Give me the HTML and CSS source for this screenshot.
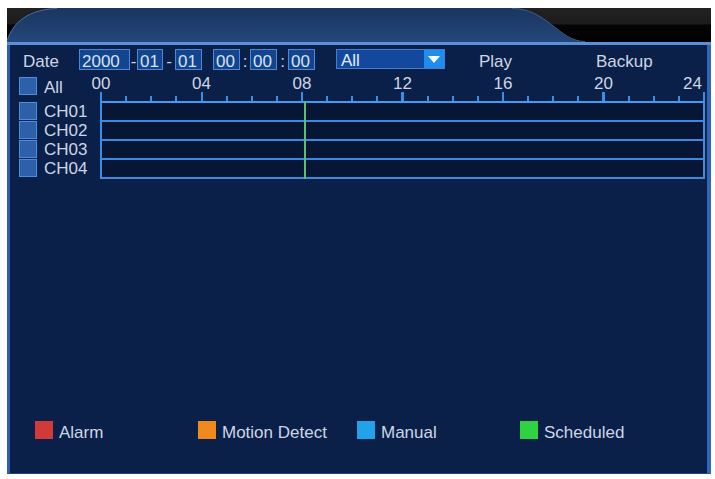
FILE: index.html
```html
<!DOCTYPE html>
<html>
<head>
<meta charset="utf-8">
<link rel="stylesheet" href="styles.css">
</head>
<body>
<div class="screen">
  <div class="titlebar">
    <svg class="tab" width="704" height="34" viewBox="0 0 704 34">
      <defs>
        <linearGradient id="tg" x1="0" y1="0" x2="0" y2="1">
          <stop offset="0" stop-color="#1a3560"/>
          <stop offset="1" stop-color="#24467a"/>
        </linearGradient>
      </defs>
      <path d="M0 34 L0 32 C6 14 22 1 50 0 L505 0 C540 0 552 34 578 34 Z" fill="url(#tg)"/>
      <path d="M0.5 32 C6 14 22 1.5 50 0.5" stroke="#4a6c9e" fill="none"/>
      <path d="M505 0.5 C540 0.5 552 33.5 578 33.5" stroke="#3a5e90" fill="none"/>
    </svg>
  </div>
  <div class="rule"></div>
  <div class="panel">
    <div class="daterow">
      <span class="lbl datelbl">Date</span>
      <span class="field w51">2000</span><span class="sep w7">-</span>
      <span class="field w26">01</span><span class="sep w12">-</span>
      <span class="field w27">01</span><span class="sep w11"></span>
      <span class="field w27">00</span><span class="sep w10">:</span>
      <span class="field w27">00</span><span class="sep w11">:</span>
      <span class="field w27">00</span>
      <div class="select">
        <span class="select-text">All</span>
        <span class="select-arrow"><svg width="12" height="7" viewBox="0 0 12 7"><path d="M0 0 H12 L6 7 Z" fill="#ffffff"/></svg></span>
      </div>
      <span class="lbl play">Play</span>
      <span class="lbl backup">Backup</span>
    </div>

    <div class="headrow">
      <div class="leftcol allcell">
        <span class="chk"></span><span class="chlabel">All</span>
      </div>
      <div class="scale">
        <span class="hour" style="left:1px">00</span>
        <span class="hour" style="left:101.5px">04</span>
        <span class="hour" style="left:202px">08</span>
        <span class="hour" style="left:302.5px">12</span>
        <span class="hour" style="left:403px">16</span>
        <span class="hour" style="left:503.5px">20</span>
        <span class="hour last">24</span>
      </div>
    </div>

    <div class="bodyrow">
      <div class="leftcol channels">
        <div class="chrow"><span class="chk"></span><span class="chlabel">CH01</span></div>
        <div class="chrow"><span class="chk"></span><span class="chlabel">CH02</span></div>
        <div class="chrow"><span class="chk"></span><span class="chlabel">CH03</span></div>
        <div class="chrow"><span class="chk"></span><span class="chlabel">CH04</span></div>
      </div>
      <div class="timeline">
        <div class="track"></div>
        <div class="track"></div>
        <div class="track"></div>
        <div class="track"></div>
        <div class="cursor" style="left:202px"></div>
      </div>
    </div>

    <div class="legend">
      <div class="item i1"><span class="sq red"></span><span class="ltext">Alarm</span></div>
      <div class="item i2"><span class="sq orange"></span><span class="ltext">Motion Detect</span></div>
      <div class="item i3"><span class="sq blue"></span><span class="ltext">Manual</span></div>
      <div class="item"><span class="sq green"></span><span class="ltext">Scheduled</span></div>
    </div>
  </div>
</div>
</body>
</html>
```

FILE: styles.css
```css
html, body {
  margin: 0;
  padding: 0;
  background: #ffffff;
}

body {
  font-family: "Liberation Sans", Arial, sans-serif;
  font-size: 17px;
  color: #cdd6e6;
}

.screen {
  margin: 8px 0 0 7px;
  width: 704px;
  height: 466px;
  display: flex;
  flex-direction: column;
}

.titlebar {
  height: 34px;
  background: linear-gradient(#222222 0, #1c1c1c 16px, #050505 17px, #020202 100%);
  display: flex;
}

.tab {
  display: block;
}

.rule {
  height: 3px;
  background: #5b8fd8;
}

.panel {
  flex: 1;
  display: flex;
  flex-direction: column;
  background: #0a2049;
  border-left: 3px solid #2a5fb2;
  border-right: 4px solid #2f66bc;
  border-bottom: 1px solid #1c4486;
}

/* date row */
.daterow {
  display: flex;
  align-items: flex-start;
  margin-top: 4px;
  padding-left: 13px;
  height: 21px;
}

.lbl {
  line-height: 19px;
  padding-top: 3px;
  white-space: nowrap;
}

.datelbl { width: 56px; }

.field {
  box-sizing: border-box;
  height: 21px;
  line-height: 19px;
  padding: 2px 0 0 2px;
  border: 1px solid #4c88d8;
  background: #12448f;
  color: #d8e2f0;
}

.w51 { width: 51px; }
.w26 { width: 26px; }
.w27 { width: 27px; }

.sep {
  line-height: 19px;
  padding-top: 3px;
  text-align: center;
  color: #c9d3e3;
}

.w7 { width: 7px; }
.w10 { width: 10px; }
.w11 { width: 11px; }
.w12 { width: 12px; }

.select {
  box-sizing: border-box;
  margin-left: 21px;
  width: 109px;
  height: 20px;
  display: flex;
  border: 1px solid #3f7ed2;
  background: #13489c;
}

.select-text {
  flex: 1;
  line-height: 19px;
  padding: 1px 0 0 4px;
  color: #e6edf8;
}

.select-arrow {
  width: 20px;
  background: #1f8cf0;
  display: flex;
  align-items: center;
  justify-content: center;
}

.select-arrow svg { display: block; }

.play {
  margin-left: 34px;
  width: 117px;
}

/* header row */
.headrow {
  display: flex;
  height: 31px;
}

.leftcol {
  width: 90px;
  box-sizing: border-box;
  padding-left: 9px;
}

.allcell {
  display: flex;
  align-items: flex-start;
  padding-top: 7px;
}

.chk {
  box-sizing: border-box;
  width: 18px;
  height: 18px;
  background: #2c60a8;
  border: 1px solid #4a8ee2;
  flex: none;
}

.chlabel {
  margin-left: 7px;
  line-height: 17px;
  padding-top: 2px;
}

.scale {
  position: relative;
  width: 605px;
  background:
    linear-gradient(#3a8ee6, #3a8ee6) right bottom / 2px 9px no-repeat,
    repeating-linear-gradient(to right, #3a8ee6 0 2px, transparent 2px 100.5px) left bottom / 100% 9px no-repeat,
    repeating-linear-gradient(to right, #3a8ee6 0 2px, transparent 2px 25.125px) left bottom / 100% 5px no-repeat;
}

.hour {
  position: absolute;
  top: 4px;
  line-height: 19px;
  transform: translateX(-50%);
}

.hour.last {
  right: 3px;
  transform: none;
}

/* body row */
.bodyrow {
  display: flex;
}

.channels {
  display: flex;
  flex-direction: column;
}

.chrow {
  height: 19px;
  display: flex;
  align-items: flex-start;
}

.chrow .chk {
  margin-top: 1px;
}

.timeline {
  position: relative;
  width: 605px;
  box-sizing: border-box;
  border: 2px solid #3a8ee6;
  border-top-color: #4699ee;
  border-bottom: none;
}

.track {
  height: 17px;
  background: #061634;
  border-bottom: 2px solid #3a8ae2;
}

.cursor {
  position: absolute;
  top: -2px;
  bottom: 0;
  width: 2px;
  background: #58c070;
}

/* legend */
.legend {
  margin-top: auto;
  margin-bottom: 31px;
  padding-left: 25px;
  display: flex;
  align-items: flex-start;
}

.item {
  display: flex;
  align-items: flex-start;
}

.i1 { width: 163px; }
.i2 { width: 159px; }
.i3 { width: 163px; }

.sq {
  width: 18px;
  height: 18px;
  flex: none;
}

.red { background: #d23a3a; }
.orange { background: #f08a1e; }
.blue { background: #22a2e8; }
.green { background: #2fd240; }

.ltext {
  margin-left: 6px;
  line-height: 19px;
  padding-top: 2px;
  white-space: nowrap;
}
```
